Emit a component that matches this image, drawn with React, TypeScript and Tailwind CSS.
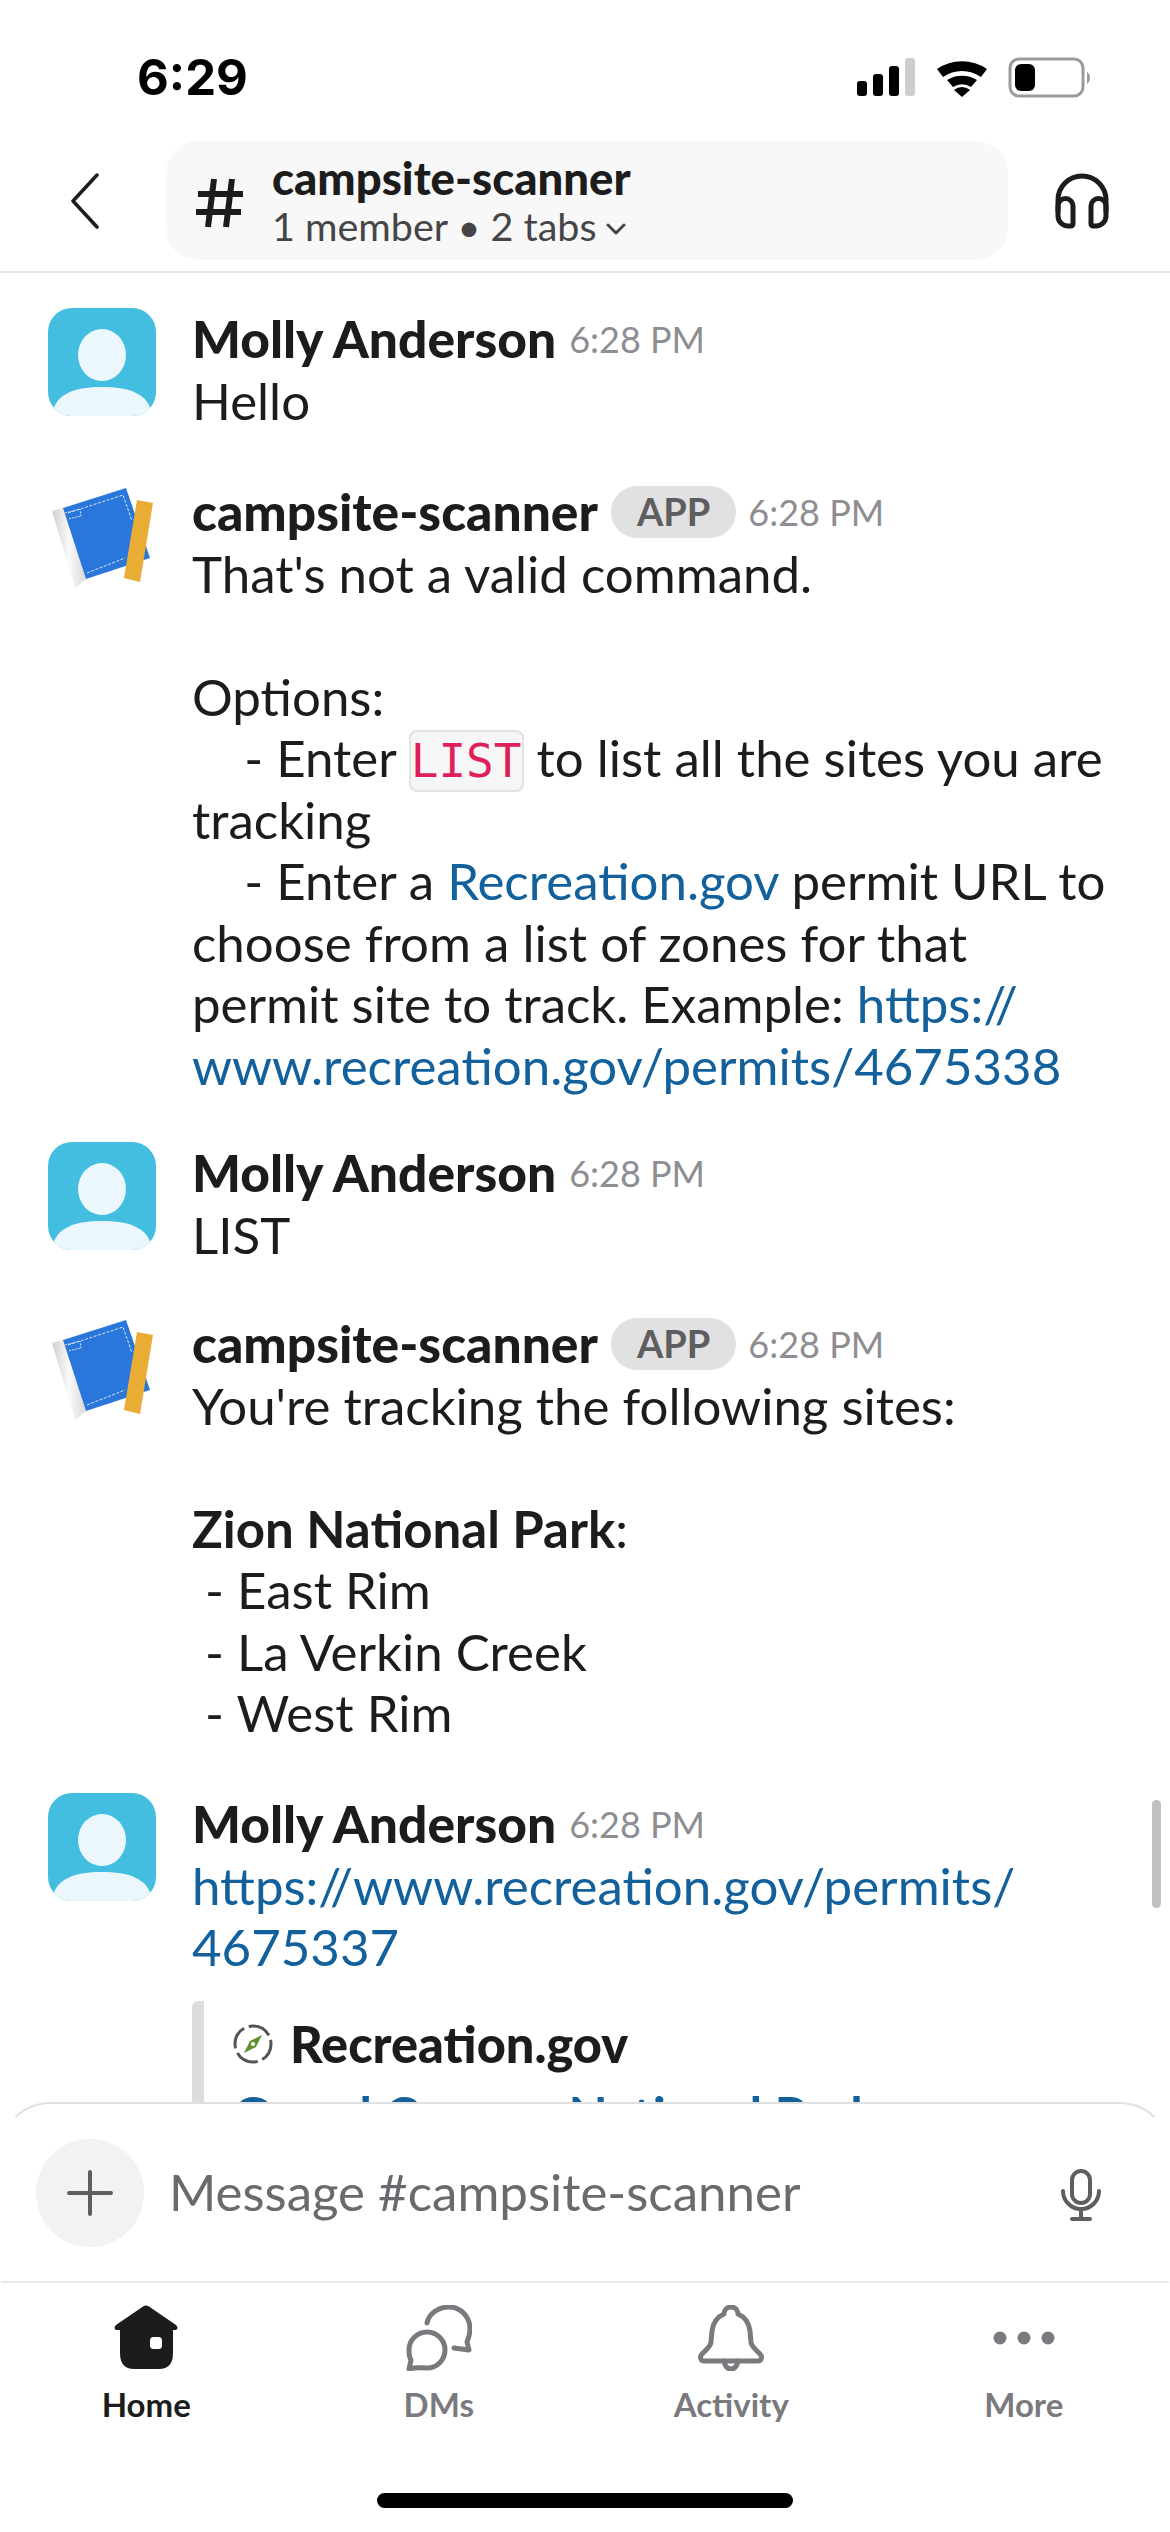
import React from "react";

const Link = ({ children }: { children: React.ReactNode }) => <span className="text-[#12609c]">{children}</span>;

const Person = () => (
  <div className="relative w-[108px] h-[108px] shrink-0 rounded-[24px] bg-[#44bee0] overflow-hidden">
    <svg viewBox="0 0 108 108" className="w-full h-full">
      <ellipse cx="54" cy="47" rx="24" ry="26" fill="#ebf7fc" />
      <path d="M4 108C6 85 28 79 54 79s48 6 50 29z" fill="#ebf7fc" />
    </svg>
  </div>
);

const Bot = () => (
  <svg viewBox="0 0 108 108" className="w-[108px] h-[108px] shrink-0 overflow-visible">
    <defs>
      <linearGradient id="roll" x1="0" x2="1" y1="0" y2="0">
        <stop offset="0" stopColor="#cfcfcf" />
        <stop offset="0.5" stopColor="#fafafa" />
        <stop offset="1" stopColor="#d8d8d8" />
      </linearGradient>
    </defs>
    <path d="M4 30 L15 27 L38 98 L27 107 Z" fill="url(#roll)" />
    <path d="M15 27 L78 7 L102 77 L38 98 Z" fill="#2a77dc" />
    <path d="M20 32 L75 14 L84 40 M39 92 L77 77" stroke="#d6e6fa" strokeWidth="1" strokeDasharray="3 1.5" fill="none" />
    <path d="M17 32 L32 28 L33 35 L20 38" stroke="#d6e6fa" strokeWidth="1" strokeDasharray="2 1" fill="none" />
    <path d="M89 19 L105 22 L92 101 L76 97 Z" fill="#e9ac35" />
  </svg>
);

const Msg = ({ name, app, bot, children, className }: { name: string; app?: boolean; bot?: boolean; children: React.ReactNode; className?: string }) => (
  <div className={"flex gap-[36px] " + (className ?? "")}>
    {bot ? <Bot /> : <Person />}
    <div className="flex-1 min-w-0">
      <div className="flex items-center h-[62px]">
        <span className="font-black text-[#1d1c1d] text-[51.5px]">{name}</span>
        {app && (
          <span className="ml-[13px] h-[52px] px-[26px] rounded-full bg-[#e1e1e1] text-[#5e5d60] font-bold text-[38px] flex items-center">APP</span>
        )}
        <span className={(app ? "ml-[12px] " : "ml-[13px] ") + "text-[#8e8d92] text-[36px]"}>6:28 PM</span>
      </div>
      <div className="text-[51px] leading-[61.5px] text-[#1d1c1d] whitespace-pre-wrap">{children}</div>
    </div>
  </div>
);

const Tab = ({ label, active, children }: { label: string; active?: boolean; children: React.ReactNode }) => (
  <div className="flex-1 flex flex-col items-center">
    <div className="h-[66px] flex items-center justify-center">{children}</div>
    <span className={"mt-[13px] text-[33px] leading-[40px] font-bold " + (active ? "text-[#1d1c1d]" : "text-[#7a797e]")}>{label}</span>
  </div>
);

export default function App() {
  return (
    <div className="w-[1170px] h-[2532px] bg-white flex flex-col overflow-hidden font-['Lato','Noto_Sans',sans-serif] relative">
      <div className="h-[141px] shrink-0 flex items-start justify-between pl-[137px] pr-[73px] pt-[49px]">
        <span className="text-[49px] leading-[58px] font-bold text-black font-['Inter','Liberation_Sans',sans-serif]">6:29</span>
        <svg width="240" height="48" viewBox="0 0 240 48" className="mt-[6px]">
          <rect x="0" y="26" width="10" height="15" rx="3" fill="#000" />
          <rect x="16" y="19" width="10" height="22" rx="3" fill="#000" />
          <rect x="32" y="11" width="10" height="30" rx="3" fill="#000" />
          <rect x="48" y="3" width="10" height="38" rx="3" fill="#cdcdcd" />
          <path d="M80 14 A44 44 0 0 1 130 14 L124 22 A33 33 0 0 0 86 22 Z" fill="#000" />
          <path d="M90 25 A28 28 0 0 1 120 25 L114 32 A17 17 0 0 0 96 32 Z" fill="#000" />
          <path d="M97 35 A12 12 0 0 1 113 35 L105 42 Z" fill="#000" />
          <rect x="153" y="4" width="73" height="37" rx="9" fill="none" stroke="#9b9b9b" strokeWidth="3" />
          <rect x="158" y="9" width="20" height="27" rx="6" fill="#000" />
          <path d="M230 17 C234 19 234 26 230 29 Z" fill="#9b9b9b" />
        </svg>
      </div>

      <div className="h-[132px] shrink-0 border-b-2 border-[#e6e6e6] flex items-start">
        <div className="w-[166px] h-[119px] flex items-center pl-[70px] shrink-0">
          <svg width="30" height="56" viewBox="0 0 30 56" fill="none" stroke="#1d1c1d" strokeWidth="3.5" strokeLinecap="round" strokeLinejoin="round">
            <path d="M27 2 L3 28 L27 54" />
          </svg>
        </div>
        <div className="w-[842px] h-[119px] rounded-[32px] bg-[#f8f8f8] flex items-center shrink-0">
          <svg width="48" height="50" viewBox="0 0 48 50" fill="none" stroke="#1d1c1d" strokeWidth="6" className="ml-[30px] mt-[4px] shrink-0">
            <path d="M18 1 L12 49 M36 1 L30 49 M2 16 H47 M0 34 H45" />
          </svg>
          <div className="ml-[28px] flex flex-col">
            <span className="font-black text-[45.5px] leading-[50px] text-[#1d1c1d]">campsite-scanner</span>
            <span className="text-[39.5px] leading-[46px] text-[#454447] flex items-center">
              1 member • 2 tabs
              <svg width="20" height="14" viewBox="0 0 20 14" fill="none" stroke="#454447" strokeWidth="3" strokeLinecap="round" strokeLinejoin="round" className="ml-[9px] mt-[6px]">
                <path d="M2 3 L10 11 L18 3" />
              </svg>
            </span>
          </div>
        </div>
        <div className="flex-1 h-[119px] flex items-center justify-start pl-[47px]">
          <svg width="54" height="56" viewBox="0 0 54 56" fill="none" stroke="#1d1c1d" strokeWidth="5" strokeLinecap="round" strokeLinejoin="round">
            <path d="M3 38V27a24 24 0 0 1 48 0v11" />
            <path d="M3 33a7.5 7.5 0 0 1 15 0v18a2 2 0 0 1-2 2h-3a10 10 0 0 1-10-10z" />
            <path d="M51 33a7.5 7.5 0 0 0-15 0v18a2 2 0 0 0 2 2h3a10 10 0 0 0 10-10z" />
          </svg>
        </div>
      </div>

      <div className="flex-1 min-h-0 overflow-hidden pl-[48px] pr-[52px] pt-[35px] flex flex-col relative">
        <Msg name="Molly Anderson">Hello</Msg>
        <Msg name="campsite-scanner" app bot className="mt-[49px]">
          {"That's not a valid command.\n\nOptions:\n    - Enter "}
          <span className="font-['DejaVu_Sans_Mono',monospace] leading-none text-[46px] text-[#e01e5a] bg-[#f6f6f6] border-2 border-[#e2e2e2] rounded-[8px] py-[2px]">LIST</span>
          {" to list all the sites you are tracking\n    - Enter a "}
          <Link>Recreation.gov</Link>
          {" permit URL to choose from a list of zones for that permit site to track. Example: "}
          <Link>https://<wbr />www.recreation.gov/permits/4675338</Link>
        </Msg>
        <Msg name="Molly Anderson" className="mt-[46px]">LIST</Msg>
        <Msg name="campsite-scanner" app bot className="mt-[47px]">
          {"You're tracking the following sites:\n\n"}
          <span className="font-bold">Zion National Park</span>
          {":\n - East Rim\n - La Verkin Creek\n - West Rim"}
        </Msg>
        <Msg name="Molly Anderson" className="mt-[49px]">
          <Link>https://www.recreation.gov/permits/<wbr />4675337</Link>
        </Msg>
        <div className="ml-[144px] mt-[23px] border-l-[12px] rounded-l-[6px] border-[#dddddd] pl-[29px] pt-[18px] shrink-0">
          <div className="flex items-center gap-[17px] h-[50px]">
            <svg width="40" height="40" viewBox="0 0 40 40" fill="none" className="shrink-0">
              <circle cx="20" cy="20" r="18" stroke="#555" strokeWidth="3" strokeDasharray="23.5 4.8" strokeDashoffset="5" />
              <path d="M29 11 L23 23 L11 29 L17 17 Z" fill="#5f8f2f" />
              <circle cx="20" cy="20" r="2" fill="#fff" />
            </svg>
            <span className="font-black text-[50.5px] text-[#1d1c1d]">Recreation.gov</span>
          </div>
          <div className="mt-[8px] text-[#12609c] font-bold text-[51px] whitespace-nowrap">Grand Canyon National Park</div>
        </div>
        <div className="absolute right-[9px] top-[1527px] w-[9px] h-[108px] rounded-full bg-[#c0c0c0]" />
      </div>

      <div className="shrink-0 h-[430px] flex flex-col bg-white relative">
        <div className="h-[181px] border-t-2 border-x-2 border-b-2 border-t-[#e0e0e0] border-b-[#e8e8e8] border-x-transparent rounded-t-[50px] flex items-start px-[34px] pt-[35px] bg-white">
          <div className="w-[108px] h-[108px] rounded-full bg-[#f2f2f2] flex items-center justify-center shrink-0">
            <svg width="46" height="46" viewBox="0 0 46 46" stroke="#5e5d60" strokeWidth="4" strokeLinecap="round">
              <path d="M23 2v42M2 23h42" />
            </svg>
          </div>
          <span className="ml-[25px] flex-1 text-[51px] leading-[106px] text-[#6a696d]">Message #campsite-scanner</span>
          <svg width="42" height="52" viewBox="0 0 42 52" fill="none" stroke="#5e5d60" strokeWidth="4" strokeLinecap="round" className="mt-[30px] mr-[32px]">
            <rect x="12" y="2" width="18" height="32" rx="9" />
            <path d="M3 22a18 18 0 0 0 36 0M21 41v9M12 50h18" />
          </svg>
        </div>
        <div className="flex pt-[22px]">
          <Tab label="Home" active>
            <svg width="66" height="66" viewBox="0 0 66 66">
              <path d="M30 1.5 Q33 -0.5 36 1.5 L63 20 Q66 23 63 25 L60 25 V48 Q60 64 46 64 H21 Q7 64 7 48 V25 L3 25 Q0 23 3 20 Z" fill="#1d1c1d" />
              <rect x="37" y="32" width="12" height="12" rx="3.5" fill="#fff" />
            </svg>
          </Tab>
          <Tab label="DMs">
            <svg width="66" height="66" viewBox="0 0 66 66" fill="none" stroke="#7a797e" strokeWidth="5" strokeLinecap="round" strokeLinejoin="round">
              <path d="M21 18 C23 8 33 2 43 2 C55 2 64 12 64 24 C64 30 62 34 61 37 L63 45 L48 43" />
              <path d="M21 27 A18 18 0 1 1 21 63 C14 63 10 62 3 64 L5 55 C3 52 3 49 3 45 A18 18 0 0 1 21 27 Z" />
            </svg>
          </Tab>
          <Tab label="Activity">
            <svg width="66" height="66" viewBox="0 0 66 66" fill="none" stroke="#7a797e" strokeWidth="5" strokeLinecap="round" strokeLinejoin="round">
              <path d="M33 2 C37 2 40 5 40 9 C47 12 51 18 52 26 L53 37 C53 40 55 42 58 45 L62 49 C65 52 63 56 60 56 L6 56 C3 56 1 52 4 49 L8 45 C11 42 13 40 13 37 L14 26 C15 18 19 12 26 9 C26 5 29 2 33 2 Z" />
              <path d="M26 56 c1 5 3 8 7 8 s6 -3 7 -8" />
            </svg>
          </Tab>
          <Tab label="More">
            <svg width="62" height="16" viewBox="0 0 62 16" fill="#7a797e">
              <circle cx="7" cy="8" r="6.5" />
              <circle cx="31" cy="8" r="6.5" />
              <circle cx="55" cy="8" r="6.5" />
            </svg>
          </Tab>
        </div>
        <div className="mt-[69px] mx-auto w-[416px] h-[15px] rounded-full bg-black" />
      </div>
    </div>
  );
}
